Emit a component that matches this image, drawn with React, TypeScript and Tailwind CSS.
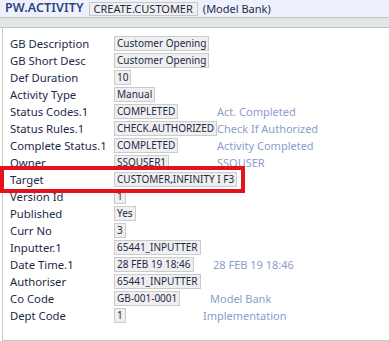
import React from "react";

type Row = { label: string; value?: string; desc?: string; descX?: number };

const rows: Row[] = [
  { label: "GB Description", value: "Customer Opening" },
  { label: "GB Short Desc", value: "Customer Opening" },
  { label: "Def Duration", value: "10" },
  { label: "Activity Type", value: "Manual" },
  { label: "Status Codes.1", value: "COMPLETED", desc: "Act. Completed", descX: 217 },
  { label: "Status Rules.1", value: "CHECK.AUTHORIZED", desc: "Check If Authorized", descX: 217 },
  { label: "Complete Status.1", value: "COMPLETED", desc: "Activity Completed", descX: 217 },
  { label: "Owner", value: "SSOUSER1", desc: "SSOUSER", descX: 217 },
  { label: "Target", value: "CUSTOMER,INFINITY I F3" },
  { label: "Version Id", value: "1" },
  { label: "Published", value: "Yes" },
  { label: "Curr No", value: "3" },
  { label: "Inputter.1", value: "65441_INPUTTER" },
  { label: "Date Time.1", value: "28 FEB 19 18:46", desc: "28 FEB 19 18:46", descX: 213 },
  { label: "Authoriser", value: "65441_INPUTTER" },
  { label: "Co Code", value: "GB-001-0001", desc: "Model Bank", descX: 210 },
  { label: "Dept Code", value: "1", desc: "Implementation", descX: 203 },
];

export default function App() {
  return (
    <div
      className="relative w-[389px] h-[341px] bg-white overflow-hidden text-[#1c2a48]"
      style={{ fontFamily: '"Noto Sans", "DejaVu Sans", sans-serif' }}
    >
      <div className="h-[18px] bg-[#eef1fd] border-b border-[#c4c4c8] flex items-center pl-[5px] gap-[5px]">
        <span className="text-[12.5px] font-semibold text-[#2a4580] leading-none tracking-[0.1px]">PW.ACTIVITY</span>
        <span className="h-[14px] px-[4px] bg-[#efefef] border border-[#c8c8c8] text-[11px] leading-[12px] text-[#1c2a48] flex items-center">
          CREATE.CUSTOMER
        </span>
        <span className="text-[11px] leading-none text-[#1c2a48]">(Model Bank)</span>
      </div>
      <div className="h-[10px] bg-[#dfe8e4] border-b border-[#bfc4c2]" />
      <div className="h-[313px] ml-[2px] border-l border-b border-[#c8c8c8] pt-[7px]">
        {rows.map((r) => (
          <div key={r.label} className="flex items-center h-[17px]">
            <div className="w-[111px] pl-[7px] text-[11.3px] leading-none whitespace-nowrap">{r.label}</div>
            <div
              className="flex items-center shrink-0"
              style={{ width: r.descX ? r.descX - 114 : undefined }}
            >
              <span className="h-[15px] px-[2px] bg-[#efefef] border border-[#cbcbcb] text-[10px] leading-[13px] whitespace-nowrap text-[#1c2a48]">
                {r.value}
              </span>
            </div>
            {r.desc && (
              <span className="text-[11px] leading-none text-[#8c9dcb] whitespace-nowrap">{r.desc}</span>
            )}
          </div>
        ))}
      </div>
      <div className="absolute left-0 top-[166px] w-[245px] h-[27px] border-[4px] border-[#e3121c]" />
    </div>
  );
}
